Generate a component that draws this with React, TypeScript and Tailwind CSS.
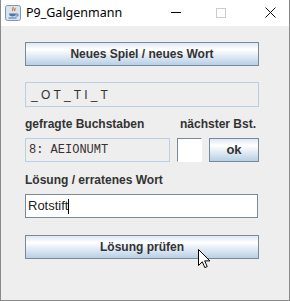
export default function App() {
  const btn =
    "w-full border border-[#7a8a99] bg-gradient-to-b from-[#dde8f3] via-white via-30% to-[#b8cfe5] text-[12px] font-bold text-[#333333] flex items-center justify-center"
  return (
    <div className="w-[290px] h-[301px] bg-[#eeeeee] border border-t-0 border-[#8a8a8a] flex flex-col font-['Liberation_Sans',Arial,sans-serif] overflow-hidden">
      {/* title bar */}
      <div className="h-[26px] bg-white flex items-center shrink-0 relative">
        <svg width="16" height="16" viewBox="0 0 16 16" className="ml-[4px]">
          <rect x="0.5" y="0.5" width="15" height="15" rx="2" fill="#d9e4ef" stroke="#7f97b0" />
          <path d="M8 2c1 1.5-1.5 2.5 0 4M10 3c.7 1-1 1.8 0 3" stroke="#e06a1f" strokeWidth="1.2" fill="none" />
          <path d="M4 8.5h7c0 2-1.5 3-3.5 3S4 10.5 4 8.5z" fill="#4a76a8" />
          <path d="M11 9h1.2a1 1 0 010 2H10.5" stroke="#4a76a8" fill="none" />
          <path d="M3.5 13h8" stroke="#4a76a8" strokeWidth="1" />
        </svg>
        <span className="ml-[5px] text-[12.5px] text-black font-['Noto_Sans',sans-serif]">P9_Galgenmann</span>
        <div className="absolute left-[170px] top-[12px] w-[10px] h-[1px] bg-black" />
        <div className="absolute left-[215px] top-[8px] w-[10px] h-[10px] border border-[#cccccc]" />
        <svg width="11" height="11" viewBox="0 0 11 11" className="absolute left-[264px] top-[7px]">
          <path d="M0.5 0.5L10.5 10.5M10.5 0.5L0.5 10.5" stroke="#111" strokeWidth="1" />
        </svg>
      </div>

      <div className="flex flex-col pl-[24px] w-[258px] pt-[16px]">
        <div className={btn + " h-[24px]"}>Neues Spiel / neues Wort</div>

        <div className="mt-[16px] h-[25px] border border-[#b8cfe5] flex items-center pl-[5px] text-[12px] text-[#333333]">
          _ O T _ T I _ T
        </div>

        <div className="mt-[10px] h-[14px] flex items-center justify-between text-[12px] font-bold text-[#333333]">
          <span>gefragte Buchstaben</span>
          <span className="mr-[3px]">nächster Bst.</span>
        </div>

        <div className="mt-[7px] h-[24px] flex">
          <div className="w-[145px] border border-[#b8cfe5] flex items-center pl-[3px] text-[12px] text-[#3a3030] font-['Liberation_Mono','Courier_New',monospace]">
            8: AEIONUMT
          </div>
          <div className="ml-[7px] w-[25px] bg-white border-t border-l border-[#7a8a99] border-r-white border-b-white border-r border-b" />
          <div className={btn + " ml-[7px] !w-[50px] text-[13px]"}>ok</div>
        </div>

        <div className="mt-[11px] h-[14px] flex items-center text-[12px] font-bold text-[#333333]">
          Lösung / erratenes Wort
        </div>

        <div className="mt-[7px] h-[24px] w-[233px] bg-white border border-[#7a8a99] flex items-center pl-[2px] text-[13px] text-[#222222]">
          Rotstift<span className="w-[1px] h-[15px] bg-black" />
        </div>

        <div className={btn + " mt-[17px] h-[24px] w-[233px] relative"}>
          Lösung prüfen
          <svg width="13" height="20" viewBox="0 0 13 20" className="absolute left-[172px] top-[13px]">
            <path d="M0.5 0.5V16.5L4.3 12.8L6.8 18.6L9.2 17.6L6.7 11.9H11.9Z" fill="white" stroke="black" strokeWidth="1" strokeLinejoin="miter" />
          </svg>
        </div>
      </div>
    </div>
  )
}
